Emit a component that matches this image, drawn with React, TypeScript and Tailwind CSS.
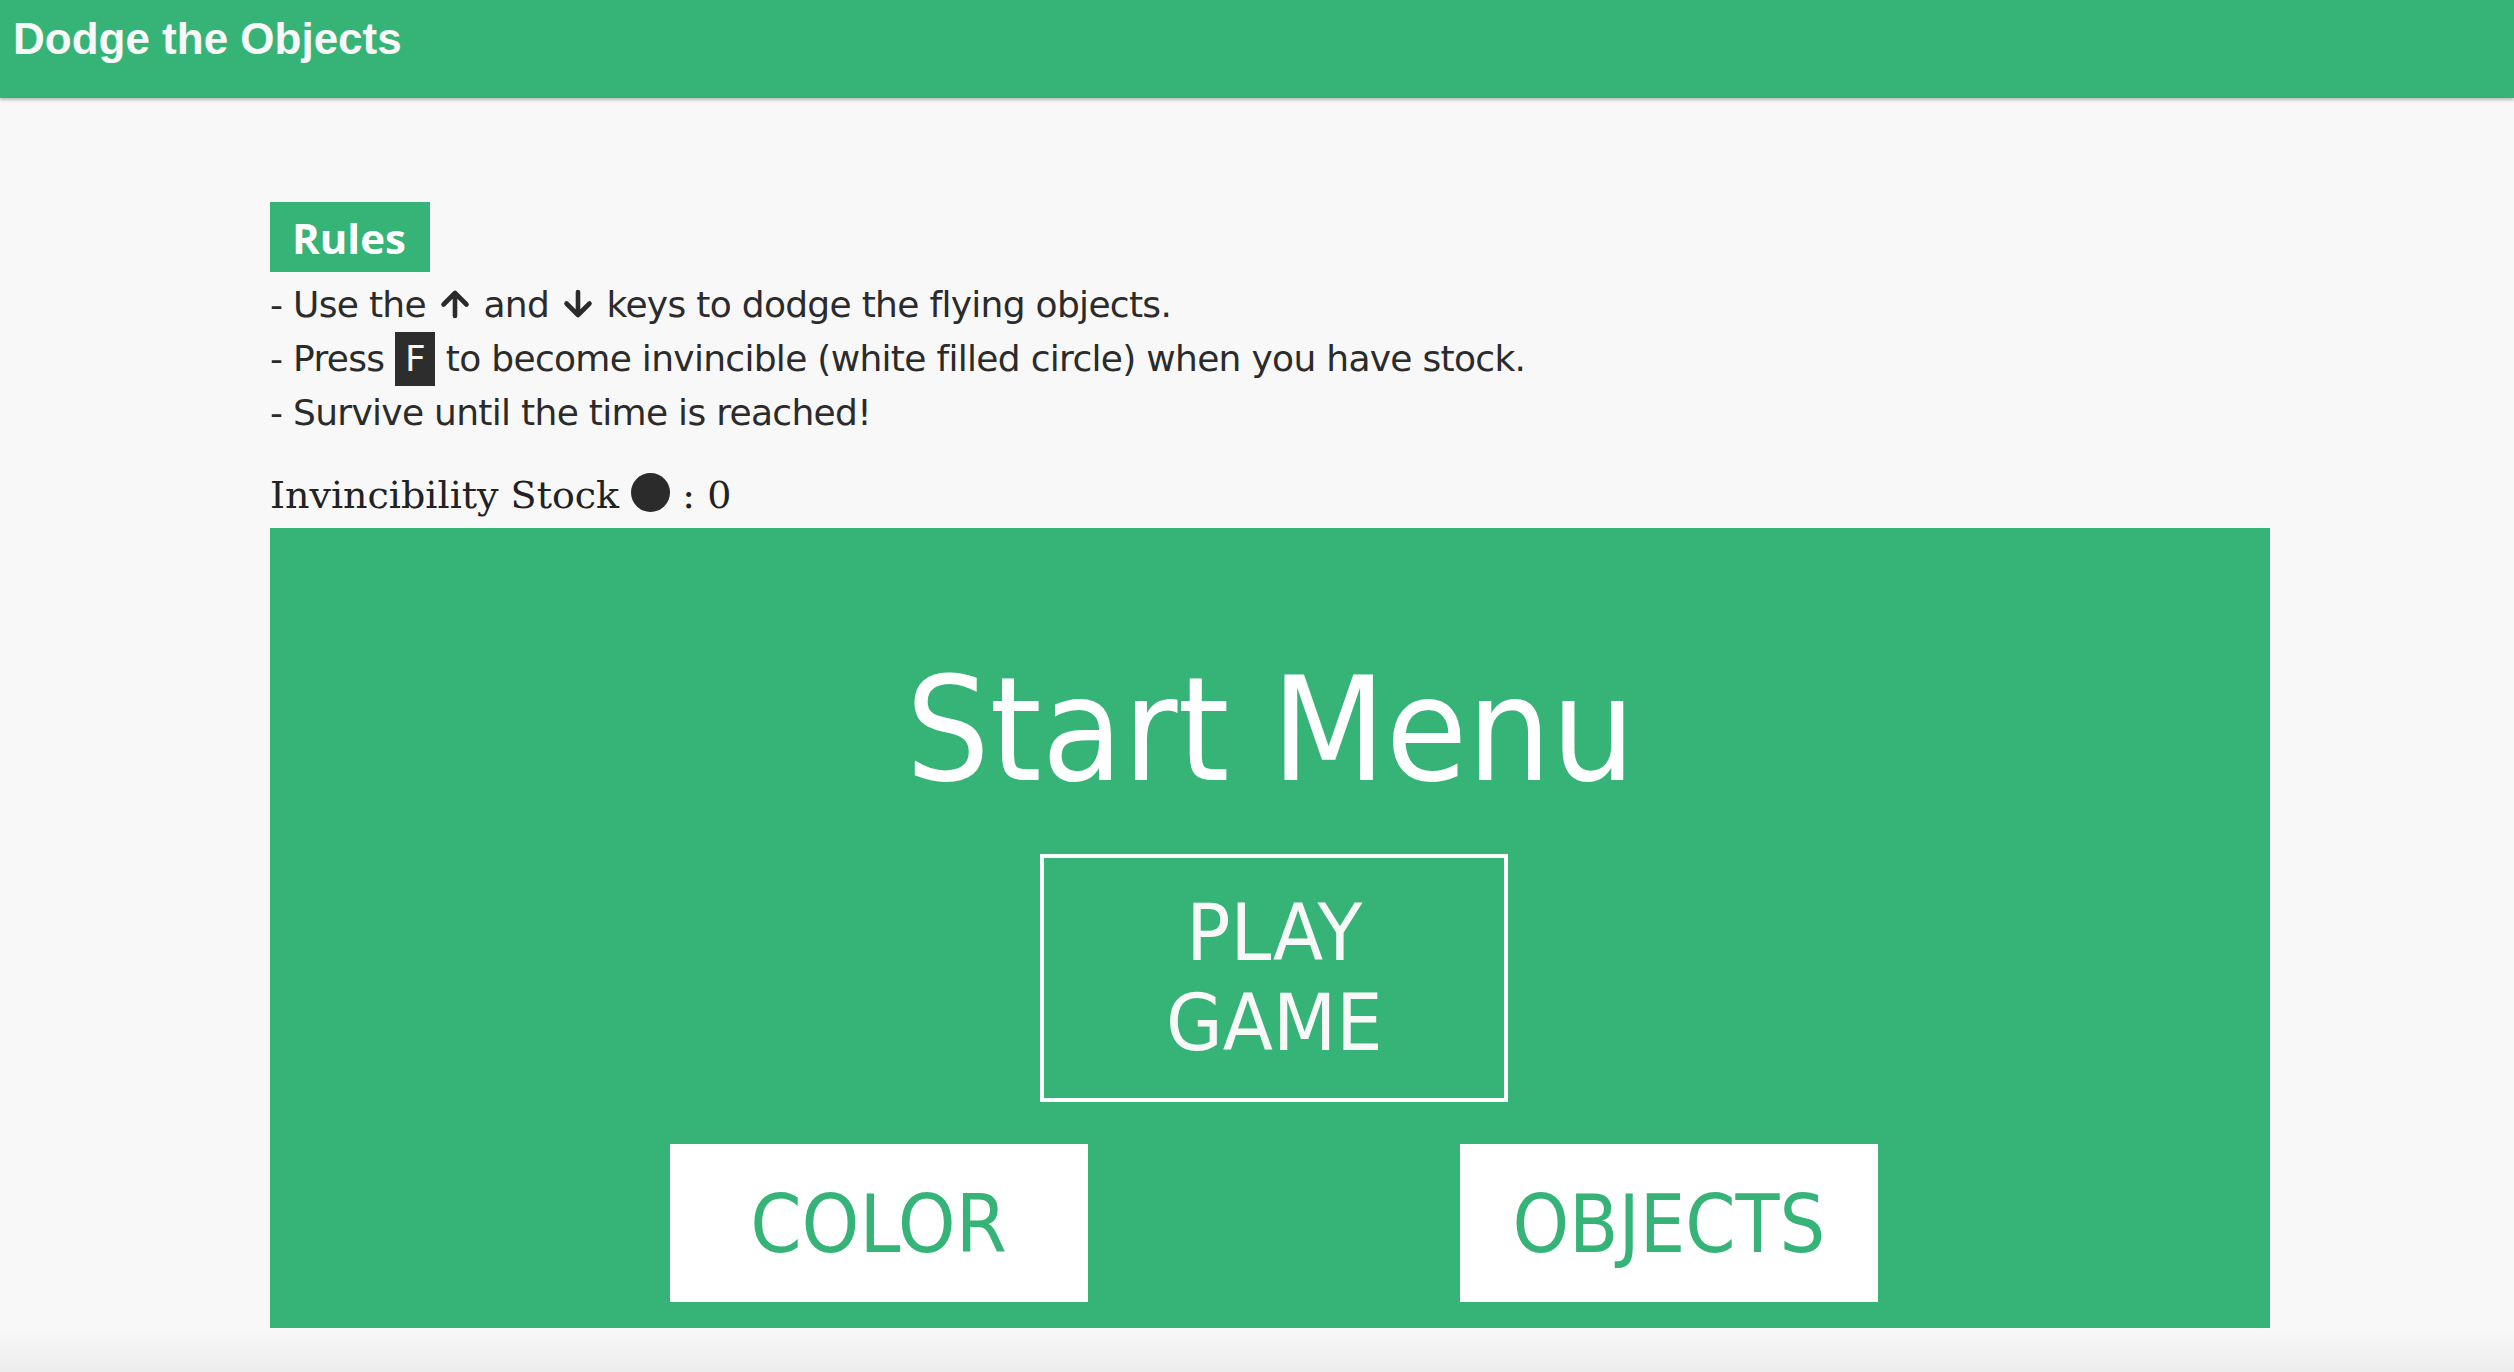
import React from "react";

function Arrow({ down }: { down?: boolean }) {
  return (
    <svg
      width="30"
      height="30"
      viewBox="0 0 30 30"
      className="inline-block align-[-2px] mx-[3px]"
      aria-hidden="true"
    >
      <path
        d={down ? "M15 3V26 M3.5 14.5L15 26L26.5 14.5" : "M15 27V4 M3.5 15.5L15 4L26.5 15.5"}
        stroke="#2b2b2b"
        strokeWidth="4.6"
        fill="none"
        strokeLinecap="round"
        strokeLinejoin="round"
      />
    </svg>
  );
}

export default function App() {
  return (
    <div className="w-full min-h-screen bg-[#f8f8f8]">
      <header className="relative z-10 h-[98px] bg-[#36b477] pl-[13px] pt-[14px] shadow-[0_2px_3px_rgba(0,0,0,0.25)]">
        <h1 className="font-['Liberation_Sans',Arial,sans-serif] text-[44px] font-bold leading-[50px] text-[#f8f8f8]">
          Dodge the Objects
        </h1>
      </header>

      <main className="pl-[270px] pt-[104px]">
        <div className="flex h-[70px] w-[160px] items-center bg-[#36b477] pl-[22px] font-['Open_Sans',sans-serif] text-[42px] font-bold text-white">
          Rules
        </div>

        <div className="mt-[6px] font-['DejaVu_Sans',sans-serif] text-[36px] leading-[54px] tracking-[-0.7px] text-[#2b2b2b]">
          <p>
            - Use the <Arrow /> and <Arrow down /> keys to dodge the flying objects.
          </p>
          <p>
            - Press{" "}
            <span className="inline-block bg-[#2d2d2d] px-[10px] leading-[54px] text-[#f8f8f8]">F</span>{" "}
            to become invincible (white filled circle) when you have stock.
          </p>
          <p>- Survive until the time is reached!</p>
        </div>

        <div className="mt-[28px] font-['DejaVu_Serif',serif] text-[38px] leading-[54px] text-[#222222]">
          Invincibility Stock{" "}
          <span className="inline-block h-[39px] w-[39px] rounded-full bg-[#2b2b2b] align-[-4px]"></span> : 0
        </div>

        <div className="mt-[6px] flex h-[800px] w-[2000px] flex-col items-center bg-[#36b477] font-['DejaVu_Sans',sans-serif]">
          <div className="mt-[130px] text-[144px] leading-none text-white">
            <span className="inline-block scale-x-[0.92]">Start Menu</span>
          </div>

          <div className="ml-[8px] mt-[52px] flex h-[248px] w-[468px] items-center justify-center border-4 border-white text-center text-[78px] leading-[90px] text-[#f8f8f8]">
            <div className="scale-x-[0.94]">
              PLAY
              <br />
              GAME
            </div>
          </div>

          <div className="mt-[42px] flex gap-[372px] self-stretch pl-[400px]">
            <div className="flex h-[158px] w-[418px] items-center justify-center bg-white pt-[4px] text-[80px] text-[#36b477]">
              <span className="inline-block scale-x-[0.92]">COLOR</span>
            </div>
            <div className="flex h-[158px] w-[418px] items-center justify-center bg-white pt-[4px] text-[80px] text-[#36b477]">
              <span className="inline-block scale-x-[0.9]">OBJECTS</span>
            </div>
          </div>
        </div>
      </main>

      <div className="h-[44px] bg-linear-to-b from-[#f8f8f8] to-[#ededed]"></div>
    </div>
  );
}
